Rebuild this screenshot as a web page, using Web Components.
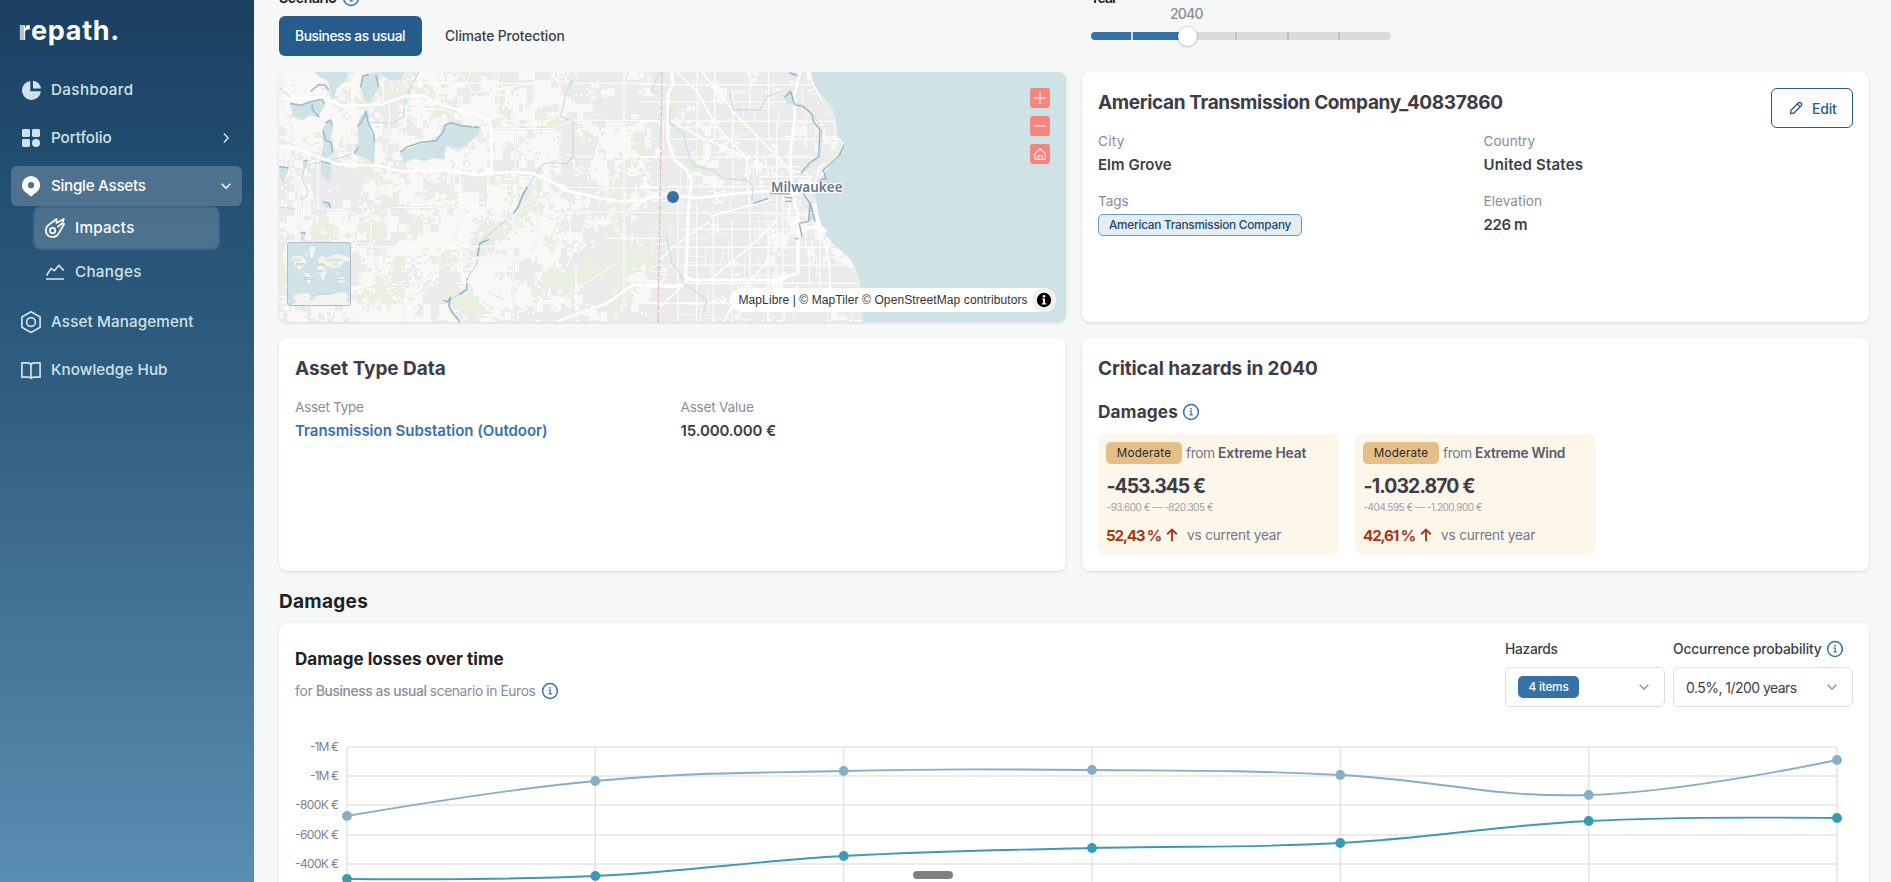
<!DOCTYPE html>
<html lang="en">
<head>
<meta charset="utf-8">
<title>repath – Impacts</title>
<style>
html,body{margin:0;height:100%;overflow:hidden;background:#f5f8f7}
body{font-family:Inter,"Liberation Sans",sans-serif;color:#3d3d48}
</style>
</head>
<body>
<rp-app></rp-app>
<script>
const define = (name, html, setup) => {
  const tpl = document.createElement('template');
  tpl.innerHTML = html;
  customElements.define(name, class extends HTMLElement {
    constructor() {
      super();
      this.attachShadow({mode: 'open'}).appendChild(tpl.content.cloneNode(true));
    }
    connectedCallback() { if (setup) setup(this, this.shadowRoot); }
  });
};

/* A line of text tracked to a given measure: <ui-text w="82">Dashboard</ui-text> */
define('ui-text', `<style>:host{display:inline-block;white-space:pre}span{display:inline-block}</style><span><slot></slot></span>`, (el, root) => {
  const w = parseFloat(el.getAttribute('w'));
  if (!w) return;
  const span = root.querySelector('span');
  const fit = () => {
    span.style.letterSpacing = '0px';
    const n = el.textContent.length, nat = span.getBoundingClientRect().width;
    if (nat) span.style.letterSpacing = ((w + .6 - nat) / n).toFixed(4) + 'px';
  };
  fit();
  requestAnimationFrame(fit);
});

define('ui-info', `<style>:host{display:inline-flex;width:18px;height:18px;color:#3672a9}</style>
<svg width="18" height="18" viewBox="0 0 18 18" fill="none" stroke="currentColor"><circle cx="9" cy="9" r="7.4" stroke-width="1.5"/><path d="M7.6 8.1H9.2V11.8M7.6 11.9H10.8" stroke-width="1.2"/><circle cx="9" cy="5.8" r=".9" fill="currentColor" stroke="none"/></svg>`);

const ICONS = {
  pie: '<path fill="currentColor" d="M9.3 1A9.5 9.5 0 1 0 19.9 11.2H9.3z"/><path fill="currentColor" d="M12 .8V8.6H20A9 9 0 0 0 12 .8z"/>',
  grid: '<g fill="currentColor"><rect x="1" y="1" width="8" height="8" rx="1.4"/><rect x="11" y="1" width="8" height="8" rx="1.4"/><rect x="1" y="11" width="8" height="8" rx="1.4"/><circle cx="15" cy="15" r="4"/></g>',
  pin: '<path fill="currentColor" fill-rule="evenodd" d="M10 0A9 9 0 0 0 1 9C1 13.4 3.3 15.5 6.3 17.6 8 18.9 9 20.4 10 20.4S12 18.9 13.7 17.6C16.7 15.5 19 13.4 19 9A9 9 0 0 0 10 0zM10 6.1A3.1 3.1 0 1 1 10 12.3 3.1 3.1 0 0 1 10 6.1z"/>',
  comet: '<g fill="none" stroke="currentColor" stroke-width="1.7" stroke-linejoin="round"><path d="M3 7.4 11.5 1V5L18.8.9 17 6 19.2 5.8 13.6 15.6A7 7 0 0 1 2.2 16.6 7 7 0 0 1 3 7.4z"/><path d="M16.6 5.6 12.5 9.2"/><circle cx="7.6" cy="12.6" r="2.7"/></g>',
  trend: '<g fill="none" stroke="currentColor" stroke-width="1.6" stroke-linejoin="round"><path d="M1.5 13.5 6 6.5 9.3 8.7 14 3.2 18.8 8.6"/><path d="M1 17H19"/></g>',
  hex: '<g fill="none" stroke="currentColor" stroke-width="1.7" stroke-linejoin="round"><path d="M10-.3 19.1 4.9V15.3L10 20.4.9 15.3V4.9z"/><circle cx="10" cy="10" r="4.4"/></g>',
  book: '<g fill="none" stroke="currentColor" stroke-width="1.7" stroke-linejoin="round"><path d="M.9 2.9H6.5Q10 2.9 10 5.3 10 2.9 13.5 2.9H19.1V17.2H13.2Q10.5 17.2 10 18.4 9.5 17.2 6.8 17.2H.9zM10 4.5V18"/></g>'
};
define('ui-icon', `<style>:host{display:inline-flex;width:20px;height:20px}svg{overflow:visible}</style><svg width="20" height="20" viewBox="0 0 20 20"></svg>`,
  (el, root) => { root.querySelector('svg').innerHTML = ICONS[el.getAttribute('name')] || ''; });

define('ui-chevron', `<style>:host{display:inline-flex;width:12px;height:12px}</style>
<svg width="12" height="12" viewBox="0 0 12 12" fill="none" stroke="currentColor" stroke-width="1.5"><path d="M1.6 3.8 6 8.1 10.4 3.8"/></svg>`);

define('nav-item', `<style>
:host{display:flex;align-items:center;height:40px;box-sizing:border-box;padding:0 10px;gap:10px;border-radius:6px;color:#cfe2ea;font-size:15.2px;font-weight:500}
:host([open]){background:rgba(255,255,255,.2);color:#fff}
:host([sub]){height:44px;padding:0 10px;border:2px solid transparent;border-radius:8px;margin:0 22px}
:host([sub][active]){color:#fff;background:rgba(255,255,255,.18);background-clip:border-box;border-color:rgba(24,62,94,.18)}
.txt{margin-top:-2px}
.tail{margin-left:auto;display:flex}
</style><ui-icon></ui-icon><span class="txt"><slot></slot></span><span class="tail"><slot name="tail"></slot></span>`,
  (el, root) => { const i = root.querySelector('ui-icon'); i.setAttribute('name', el.getAttribute('icon')); i.connectedCallback(); });

define('app-sidebar', `<style>
:host{display:block;width:254px;height:882px;box-sizing:border-box;padding:0 12px 0 11px;background:linear-gradient(#1b3f61 0,#235073 22%,#315f82 46%,#5a8db2 100%)}
.logo{height:70px;box-sizing:border-box;padding:14px 0 0 7.5px;color:#fff;font-size:27px;line-height:34px;font-weight:700}
.logo b{background:linear-gradient(90deg,#b9c2cf 0 38%,#fff 48%);-webkit-background-clip:text;background-clip:text;color:transparent}
nav{display:flex;flex-direction:column;gap:8px}
.right{transform:rotate(-90deg)}
</style>
<div class="logo"><ui-text w="101"><b>r</b>epath.</ui-text></div>
<nav>
<nav-item icon="pie"><ui-text w="82">Dashboard</ui-text></nav-item>
<nav-item icon="grid"><ui-text w="60">Portfolio</ui-text><ui-chevron class="right" slot="tail"></ui-chevron></nav-item>
<div>
<nav-item icon="pin" open><ui-text w="94">Single Assets</ui-text><ui-chevron slot="tail"></ui-chevron></nav-item>
<nav-item icon="comet" sub active><ui-text w="59">Impacts</ui-text></nav-item>
<nav-item icon="trend" sub><ui-text w="66">Changes</ui-text></nav-item>
</div>
<nav-item icon="hex"><ui-text w="142">Asset Management</ui-text></nav-item>
<nav-item icon="book"><ui-text w="116">Knowledge Hub</ui-text></nav-item>
</nav>`);

define('scenario-bar', `<style>
:host{display:grid;grid-template-columns:1fr 1fr;gap:16px;height:72px}
.label{height:20px;line-height:20px;margin-top:-12px;display:flex;align-items:center;gap:5px;color:#17171c;font-size:14px;font-weight:600}
.label ui-info{margin-top:-1px}
.tabs{display:flex;margin-top:8px;height:40px;line-height:40px;font-size:13.8px;font-weight:500}
.on{background:#265b8c;color:#fff;border-radius:6px;padding:0 17px 0 16px;width:110px}
.off{padding-left:23px}
.year{padding-left:8px}
.num{height:18px;line-height:18px;color:#8b8c98;font-size:14px;margin:-3px 0 0 80px;font-weight:500}
.slider{width:300px;height:8px;border-radius:4px;background:linear-gradient(#3672a9,#3672a9) 0/97px 8px no-repeat #dadbe0;margin:9px 0 0 .5px;position:relative}
i{position:absolute;top:0;width:2px;height:8px;background:#c0c1ca}
.thumb{position:absolute;left:87px;top:-5.5px;width:19px;height:19px;border-radius:50%;background:#fff;box-shadow:0 0 1px 1px rgba(0,0,0,.1),0 1px 3px rgba(0,0,0,.15)}
</style>
<div><div class="label"><ui-text w="57">Scenario</ui-text><ui-info></ui-info></div>
<div class="tabs"><div class="on"><ui-text w="109.5">Business as usual</ui-text></div><div class="off"><ui-text w="119">Climate Protection</ui-text></div></div></div>
<div class="year"><div class="label"><ui-text w="26">Year</ui-text></div><div class="num"><ui-text w="32">2040</ui-text></div>
<div class="slider"><i style="left:40px;background:#dadbe0"></i><i style="left:144px"></i><i style="left:196px"></i><i style="left:247px"></i><span class="thumb"></span></div></div>`);

define('ui-card', `<style>
:host{display:block;box-sizing:border-box;background:#fff;border-radius:8px;padding:16px;box-shadow:0 1px 3px rgba(0,0,0,.13)}
</style><slot></slot>`);

define('ui-field', `<style>:host{display:block;height:60px}
.l{height:20px;line-height:20px;font-size:13.6px;color:#8b8c98}
.v{height:24px;line-height:24px;margin-top:2px;font-size:15px;font-weight:600;color:#3d3d48;white-space:nowrap}
::slotted([slot=label]){display:inline-block}</style>
<div class="l"><slot name="label"></slot></div><div class="v"><slot></slot></div>`);

define('map-view', `<style>
:host{display:block;position:relative;height:250px;border-radius:8px;overflow:hidden;background:#f9f8f6;box-shadow:0 1px 3px rgba(0,0,0,.13)}
svg{display:block}
.ctl{position:absolute;right:16px;top:16px;display:flex;flex-direction:column;gap:8px}
.ctl svg{background:#f48680;border-radius:3px}
.attr{position:absolute;right:10px;bottom:10px;height:24px;width:326px;box-sizing:border-box;padding-left:8.5px;border-radius:12px;background:#fff;display:flex;justify-content:space-between;align-items:center;font:12px/24px "Liberation Sans",sans-serif;color:#333}
.attr svg{border-radius:12px}
.mini{position:absolute;left:8px;bottom:16px;border:1px solid #b3bcc8;border-radius:3px;overflow:hidden;width:62px;height:62px;background:#cfe2e6}
.pin{position:absolute;left:387.5px;top:119px;width:12px;height:12px;border-radius:50%;background:#3672a9}
.city{position:absolute;left:492px;top:106px;line-height:18px;font-size:13.4px;font-weight:600;font-family:"Noto Sans",sans-serif;color:#6b7687;text-shadow:0 0 1px #fff,1px 1px 1px #fff,-1px -1px 1px #fff,1px -1px 1px #fff,-1px 1px 1px #fff}
</style>
<svg class="base" width="787" height="250" viewBox="0 0 787 250">
<path class="grey" fill="#ebebeb"/><path class="green" fill="#e9f0e1"/><path class="gaps" stroke="#f8f8f7" fill="none"/>
<g transform="translate(-19,-72) scale(.33333)" fill="none" stroke-linejoin="round">
<g fill="#cfe2e6">
<path d="M162 216H265L256 244 228 268 224 298 216 296 204 244 180 232z"/>
<path d="M307 226 358 218 354 264 330 308 316 304 302 262z"/><path d="M362 216H430L424 236 398 242 378 234z"/>
<path d="M90 308 120 318 158 306 186 304 194 318 182 336 176 352 150 346 126 362 98 346z"/>
<path d="M200 366 212 360 220 378 212 420 220 464 196 474 182 472 190 434 186 390z"/>
<path d="M184 484 210 488 216 506 206 546 194 534 182 516z"/>
<path d="M300 352 316 334 326 344 328 388 346 430 342 490 322 478 280 462 296 420 292 376z"/>
<path d="M420 456 480 432 530 424 554 376 576 368 658 382 658 400 624 432 598 446 554 438 554 478 520 474 492 484 466 476 430 488z"/>
<path d="M58 500 86 502 82 520 70 550 58 532z"/><path d="M188 606 206 606 212 624 198 626z"/><path d="M122 698 138 698 132 724 122 720z"/><path d="M128 484 144 484 140 506 128 496z"/>
</g>
<g stroke="#a2bccb" stroke-width="5"><path d="M420 456 444 440 478 428 528 422 552 392 554 376 572 368 604 378 658 382"/><path d="M90 310 122 316 158 304 186 298 194 312M152 274 176 254 196 256 206 270M302 262 308 228 326 224M348 226 356 262M156 312 158 330 178 352M196 368 212 360 216 376M190 392 196 420 214 428 218 458M294 380 312 352 318 334 324 366 340 402 344 428M182 484 212 490M58 500 86 504M130 484 142 480M188 606 206 608 212 622M122 698 138 698M282 460 296 442"/></g>
<g stroke="#c3dde3" stroke-width="3.5"><path d="M476 216 450 268 434 310 430 352 396 370 330 366M937 240 918 280 902 350 938 364 940 430 938 470 918 492 870 488 846 494 822 530 800 566 776 616 752 650 690 700 660 730 652 790 622 834 620 870 598 884 566 900 574 938 600 965M58 620 104 628M134 500 126 540 144 570 140 590 124 600M150 492 214 480 280 462M58 264 90 290"/></g>
<g stroke="#8cb0c1" stroke-width="4"><path d="M802 560 786 590 774 622 756 646M688 718 660 730 652 768M550 900 562 906 572 892 566 918 578 938 600 965M622 836 620 868 598 884"/></g>
<g stroke="#e0e0e0" stroke-width="7"><path d="M68 216V296L68 330 94 370V470 M94 478 94 520 116 550V640L118 728M98 300 M124 610 190 628 250 630 324 656 398 622H520L600 616V680L584 700 598 740 632 774 780 782 810 764 836 700 832 600 910 574M360 500 356 570 336 620 332 730 350 790 358 826 400 852 432 920V965M400 854H460L550 800 632 770M400 862 340 910 270 958M388 310V400L374 494M714 216V340L766 374V516M696 386H880L940 360 1200 362M920 562 1200 564M828 648H910L930 634 1200 638M760 774V965"/></g>
<g stroke="#fff" stroke-width="4"><path d="M68 216V296L68 330 94 370V470L94 520 116 550V640L118 728M124 610 190 628 250 630 324 656 398 622H520L600 616V680L584 700 598 740 632 774 780 782 810 764 836 700 832 600 910 574M360 500 356 570 336 620 332 730 350 790 358 826 400 852 432 920V965M400 854H460L550 800 632 770M400 862 340 910 270 958M388 310V400L374 494M714 216V340L766 374V516M696 386H880L940 360 1200 362M920 562 1200 564M828 648H910L930 634 1200 638M760 774V965"/>
<path stroke-width="3" d="M370 240V304M280 240V480M174 470V620M600 500V740M684 500V620M822 216V400M930 640V720M460 250H820L640 278 600 216M948 470H1200M1040 362V600M1092 216V920M948 800V965M278 740H800M870 640H990L920 800M560 460 640 530M1038 715H1200M760 660V780M940 250H1190M420 320 560 330 640 380M600 620 740 626 836 700M860 690 910 740M436 940 530 830M900 900 1070 790"/></g>
<g stroke="#fff" stroke-width="8"><path d="M62 296 190 292 246 318 360 314 430 290 486 286 530 310 660 348 688 360 694 390V514L660 526 560 510 420 514 360 498 230 492 100 442H58M660 522 760 516 816 520 884 550 920 572 1010 592 1090 606 1200 590M890 965 1040 910 1120 854 1200 856"/></g>
<g stroke="#f6f6f5" stroke-width="4"><path d="M750 650 830 612M760 650 830 570M680 618 800 700M690 640 840 690M560 820 660 770M600 870 760 690M740 600 784 720"/></g>
</g>
<g transform="translate(361,-12) scale(.33333)" fill="none" stroke-linejoin="round">
<path fill="#cfe2e6" d="M512 36 520 66 538 98 556 118 580 150 590 190 594 234 612 250 600 282 564 322 546 342 534 374 524 400 530 440 540 480 554 520 580 552 620 586 640 612 656 650 666 690 668 790H1280V36z"/>
<path fill="#cfe2e6" d="M430 112 450 94 466 112 462 136 440 130zM505 426 514 420 526 480 506 484zM450 38H474L468 50H456z"/>
<g fill="#e6efdf"><path d="M92 60 116 80 112 150 96 200 92 130zM92 190 130 216 140 250 118 246zM130 300 200 318 190 340 150 330zM58 460H88V500L60 508zM196 420 220 424 214 452 198 448zM280 524 330 520 352 538 340 546z"/></g>
<g stroke="#fdfdfd" stroke-width="6"><path d="M94 36 100 74 84 100V240L104 300 140 330 154 366 146 440 140 600 136 650 154 660H420L440 650 474 640V460L456 400 450 290 464 180V100L480 36" stroke="#fff" stroke-width="9"/>
<path d="M0 424 60 402 170 414 270 402 390 392" stroke="#fff" stroke-width="9"/><path d="M0 678 110 680 150 655" stroke="#fff" stroke-width="8"/>
<path stroke-width="5" d="M186 36 290 166 450 330M110 36 172 96 230 200 320 294 328 430M90 180 160 220 320 294M60 740 146 660M210 660 330 560 408 484M200 490 100 560 60 600M210 470 390 420M250 790 280 730 384 600M520 430 540 490 550 540 568 600 570 690M564 320 520 380 500 340 440 330M596 236 606 250 590 290 540 320 524 370" stroke="#fff"/></g>
<g stroke="#fdfdfd" stroke-width="3.5"><path d="M0 74H522M0 126H440M0 184H588M90 238H590M0 292H540M320 320H480M360 350H520M0 380H450M0 458H530M120 508H440M80 562H560M120 616H630M120 670H655M0 730H560M172 36V238M224 36V240M278 90V420M330 36V160M386 36V240M410 180V560M114 380V790M170 430V790M220 470V790M276 480V790M330 430V740M384 480V790M428 360V790M508 560V670M540 520V680M0 310 40 370M350 220V350M500 36 550 130"/></g>
<g stroke="#c9e0e6" stroke-width="4"><path d="M90 140 90 190 130 220 150 300 170 320 220 330 250 356 320 360 340 380 336 420M60 36 34 90 50 100M270 100 280 150 360 150 380 110 430 94M80 530 96 610 114 630 130 670 200 720 190 760"/></g>
<g stroke="#94b3c4" stroke-width="4"><path d="M448 38 474 48M434 112 452 94 464 134 490 140 516 162 520 184 540 210 536 290 508 310 482 340M340 430 384 416M390 400 450 402M432 412 458 414M436 424 456 424M490 402 510 430 506 484 478 490 486 530M510 430 526 484M612 254 598 286 550 330 558 356 532 362M466 536H476"/></g>
<g stroke="#c6dce3" stroke-width="3"><path d="M464 130 490 136 520 162 545 210 541 290 512 314 486 344"/></g>
<path d="M66 36 60 420 54 790" stroke="#e0c0c2" stroke-width="4" stroke-dasharray="15 5"/>
<path d="M594 236 608 252 592 290 550 328 560 300 586 270z" fill="#edf1e3"/>
<path d="M524 430 534 490 556 514 540 512 526 500 500 506" stroke="#fff" stroke-width="9"/>
</g></svg>
<div class="city"><ui-text w="71">Milwaukee</ui-text></div>
<div class="pin"></div>
<div class="mini"><svg width="62" height="62" viewBox="0 0 186 186"><g fill="#f3f4ef">
<path d="M8 48 14 40 32 38 44 42 52 50 58 58 50 64 46 72 40 74 34 84 28 72 20 66 18 54zM50 30 56 32 60 40 54 42zM64 14 72 9 82 12 80 28 72 46 66 40 66 26zM42 84 54 92 60 96 50 96zM52 92 62 92 74 102 68 114 60 124 56 110zM88 70 104 68 116 80 114 92 108 108 102 114 98 98 88 84zM90 52 96 44 104 36 112 46 128 38 150 34 186 42V52L168 56 160 66 152 76 142 70 136 80 128 70 118 72 108 62 92 62zM148 108 160 102 170 104 176 114 164 120 150 118zM140 86 152 90 160 94 148 94z"/>
<path d="M14 158 34 152 56 150 66 152 68 164 62 172 74 172 84 160 98 154 120 152 140 154 156 148 178 150 180 162 172 174 186 178V186H14L24 176z"/></g>
<g fill="#dfe9d9"><path d="M10 48 26 44 42 50 32 58 20 56zM106 50 128 44 168 48 154 56 122 56zM90 80 104 84 102 92 94 90z"/></g>
<g stroke="#a9b1b6" stroke-width="1.6"><path d="M24 62H48M24 66H46M88 63H108M134 63H150M86 84H112M50 104H72M48 109H76M92 154H130M146 110H176"/></g></svg></div>
<div class="ctl">
<svg width="20" height="20" stroke="#fcd5d2" stroke-width="1.5"><path d="M4 10H16M10 4V16"/></svg>
<svg width="20" height="20" stroke="#fcd5d2" stroke-width="1.5"><path d="M4 10H16"/></svg>
<svg width="20" height="20" stroke="#fde8e6" stroke-width="1.2" fill="none"><path d="M5 9.8V15.4H15.4V9.8L10.2 4.9zM8.4 15.2V11.6H12V15.2"/></svg></div>
<div class="attr"><ui-text w="288.5">MapLibre | © MapTiler © OpenStreetMap contributors</ui-text>
<svg width="24" height="24"><rect width="24" height="24" fill="#f0f0f0"/><circle cx="12" cy="12" r="7.2"/><path d="M10 10.4H13V15.3H14.3V16.4H9.8V15.3H11.1V11.5H10z" fill="#fff"/><circle cx="12" cy="8.2" r="1.3" fill="#fff"/></svg></div>`,
(el, root) => {
  /* land cover: thresholded value noise, merged into horizontal runs */
  const h = (x, y, s) => { let n = Math.imul(x, 374761393) ^ Math.imul(y, 668265263) ^ Math.imul(s, 974711); n = Math.imul(n ^ (n >>> 13), 1274126177); return ((n ^ (n >>> 16)) >>> 0) / 4294967296; };
  const block = (x, y, c, s) => h(Math.floor(x / c), Math.floor(y / c), s);
  const smooth = (x, y, c, s) => {
    const gx = x / c, gy = y / c, ix = Math.floor(gx), iy = Math.floor(gy), fx = gx - ix, fy = gy - iy;
    return (h(ix, iy, s) * (1 - fx) + h(ix + 1, iy, s) * fx) * (1 - fy) + (h(ix, iy + 1, s) * (1 - fx) + h(ix + 1, iy + 1, s) * fx) * fy;
  };
  const runs = test => {
    let d = '';
    for (let y = 0; y < 250; y += 2) for (let x = 0; x < 620;) {
      if (!test(x, y)) { x += 2; continue; }
      const x0 = x; while (x < 620 && test(x, y)) x += 2;
      d += `M${x0} ${y}h${x - x0}v2h${x0 - x}z`;
    }
    return d;
  };
  root.querySelector('.grey').setAttribute('d', runs((x, y) => {
    const v = .56 * smooth(x, y, 19, 1) + .28 * block(x, y, 8, 2) + .16 * block(x, y, 3, 3);
    return v > (x > 370 ? .33 : x > 280 ? .42 : .54);
  }));
  root.querySelector('.green').setAttribute('d', runs((x, y) => {
    const v = .64 * smooth(x, y, 17, 7) + .2 * block(x, y, 6, 8) + .16 * block(x, y, 3, 9);
    return v > (x > 370 ? .8 : y > 150 ? .63 : .67);
  }));
  let g = '';
  for (let i = 0; i < 150; i++) {
    const x = 370 + Math.round(h(i, 1, 21) * 200), y = Math.round(h(i, 2, 22) * 250), l = 6 + Math.round(h(i, 3, 23) * 20);
    g += h(i, 4, 24) > .5 ? `M${x} ${y + .5}h${l}` : `M${x + .5} ${y}v${l}`;
  }
  root.querySelector('.gaps').setAttribute('d', g);
});

define('hazard-tile', `<style>
:host{display:block;box-sizing:border-box;width:241px;height:121px;border-radius:8px;background:#fdf6ea;padding:8px}
.top{display:flex;align-items:center;height:22px;font-size:13.8px;color:#767888;white-space:pre}
.badge{width:76px;height:22px;line-height:22px;text-align:center;border-radius:5px;background:#e5bf88;color:#2b2a2c;font-size:11.6px;margin-right:4px}
.top b{font-weight:600;color:#5a5b6c}
.top ui-text{margin-right:3.5px}.badge ui-text{margin:0}
.val{height:28px;line-height:28px;margin-top:8px;font-size:19.4px;font-weight:700;padding-left:.5px}
.rng{height:14px;line-height:14px;font-size:10px;color:#9fa0aa;padding-left:.5px}
.pct{display:flex;align-items:center;height:20px;margin-top:11px;font-size:15.2px;font-weight:700;color:#a1391d}
.pct svg{margin:0 9px 0 5px}
.vs{font-size:13.6px;font-weight:400;color:#767888}
</style>
<div class="top"><span class="badge"><ui-text w="54">Moderate</ui-text></span><ui-text w="28">from</ui-text><b><slot></slot></b></div>
<div class="val"><slot name="value"></slot></div><div class="rng"><slot name="range"></slot></div>
<div class="pct"><slot name="pct"></slot><svg width="12" height="14" viewBox="0 0 12 14" fill="none" stroke="currentColor" stroke-width="1.9"><path d="M6 13.2V2M1.2 6.3 6 1.6 10.8 6.3"/></svg><ui-text class="vs" w="93.5">vs current year</ui-text></div>`);

define('ui-select', `<style>
:host{display:block}
.l{height:20px;line-height:20px;display:flex;align-items:center;gap:4px;font-size:13.8px;font-weight:500;color:#3d3d48}
.b{height:40px;box-sizing:border-box;border:1px solid #dcdde1;border-radius:6px;margin-top:8px;padding:0 14px 0 12px;display:flex;align-items:center;justify-content:space-between;font-size:14px;background:#fff}
ui-chevron{color:#9b9ca4}
</style><div class="l"><slot name="label"></slot></div><div class="b"><slot></slot><ui-chevron></ui-chevron></div>`);

define('loss-chart', `<style>:host{display:block;height:160px}svg{display:block;overflow:visible}text{font-family:Inter,sans-serif;font-size:12px;fill:#7f818e}</style><svg width="1558" height="160" viewBox="295 722 1558 160"></svg>`,
(el, root) => {
  const xs = [347, 595.3, 843.7, 1092, 1340.3, 1588.7, 1837];
  let s = '';
  [[747,'-1M €',29],[776,'-1M €',29],[805,'-800K €',44],[835,'-600K €',44],[864,'-400K €',44]].forEach(([y,t,w]) => {
    s += `<path d="M347 ${y}H1837" stroke="#ebebeb" stroke-width="2"/><text x="${339 - w}" y="${y + 4}" textLength="${w}">${t}</text>`;
  });
  xs.forEach(x => s += `<path d="M${x} 747V900" stroke="#dfdfe0" stroke-width="1.2"/>`);
  const line = (ys, c) => {
    let d = `M${xs[0]} ${ys[0]}`;
    const m = ys.map((y, i) => i && i < 6 ? (ys[i + 1] - ys[i - 1]) / 2 * .8 : 0);
    for (let i = 0; i < 6; i++) {
      const a = i ? 99 : 0, b = i < 5 ? 99 : 0;
      d += `C${xs[i] + a} ${ys[i] + (i ? m[i] / 2 : 0)} ${xs[i + 1] - b} ${ys[i + 1] - (i < 5 ? m[i + 1] / 2 : 0)} ${xs[i + 1]} ${ys[i + 1]}`;
    }
    s += `<path d="${d}" fill="none" stroke="${c}" stroke-width="1.9"/>` + xs.map((x, i) => `<circle cx="${x}" cy="${ys[i]}" r="4.9" fill="${c}"/>`).join('');
  };
  line([816, 781, 771, 770, 775, 795, 760], '#88adc7');
  line([879, 876, 856, 848, 843, 821, 818], '#3c9ab2');
  root.querySelector('svg').innerHTML = s;
});

define('rp-app', `<style>
:host{display:grid;grid-template-columns:254px 1fr;height:882px;overflow:hidden;position:relative}
main{padding:0 22px 0 25px;overflow:hidden;height:882px;box-sizing:border-box}
.two{display:grid;grid-template-columns:787px 787px;gap:16px}
.r1{grid-auto-rows:250px}.r2{grid-auto-rows:233px;margin-top:16px}
.head{display:flex;justify-content:space-between;height:28px}
.t{font-size:19px;line-height:30px;font-weight:700;color:#3d3d48}
.edit{box-sizing:border-box;width:82px;height:40px;border:1px solid #265b8c;border-radius:6px;color:#265b8c;font-size:14px;font-weight:500;display:flex;align-items:center;gap:9px;padding-left:17px}
.fields{display:grid;grid-template-columns:1fr 1fr;gap:0 16px;margin-top:15px}
.tag{display:inline-block;box-sizing:border-box;width:204px;height:22px;line-height:20px;border:1px solid #659bbd;border-radius:5px;background:#e5edf3;color:#20486d;font-size:11.8px;font-weight:500;padding-left:10px;vertical-align:top;margin-top:.5px}
.link{color:#3672a9}
.sub{display:flex;align-items:center;gap:4px;font-size:17.2px;line-height:24px;font-weight:700;margin-top:18px}
.tiles{display:flex;gap:16px;margin-top:10px}
h2{font-size:19px;line-height:28px;font-weight:700;color:#212126;margin:17px 0 7px}
.losses{height:300px}
.lh{display:flex;justify-content:space-between;height:83px}
.lt{font-size:17px;line-height:24px;font-weight:700;color:#212126;margin-top:8px}
.ls{display:flex;align-items:center;gap:3.3px;height:20px;margin-top:10px;font-size:13.8px;color:#8b8c98}
.ls b{font-weight:500}
.ls ui-info{margin-left:2px}
.filters{display:grid;grid-template-columns:160px 180px;gap:8px}
.chip{background:#3672a9;color:#fff;height:22px;width:61px;line-height:22px;border-radius:5px;font-size:11.8px;font-weight:500;text-align:center}
.handle{position:absolute;left:913px;top:871px;width:40px;height:8px;border-radius:4px;background:#808080}
</style>
<app-sidebar></app-sidebar>
<main>
<scenario-bar></scenario-bar>
<section class="two r1">
<map-view></map-view>
<ui-card><div class="head"><ui-text class="t" w="404">American Transmission Company_40837860</ui-text>
<div class="edit"><svg width="14" height="14" viewBox="0 0 14 14" fill="none" stroke="currentColor" stroke-width="1.3" stroke-linejoin="round"><path d="M1.5 12.6 2 9.3 8.9 2.2Q10.5.8 12 2.1T11.9 5L5 12 1.5 12.6zM8.2 3.1 11.1 5.8"/></svg><ui-text w="24">Edit</ui-text></div></div>
<div class="fields">
<ui-field><ui-text slot="label" w="26">City</ui-text><ui-text w="73">Elm Grove</ui-text></ui-field>
<ui-field><ui-text slot="label" w="51">Country</ui-text><ui-text w="99">United States</ui-text></ui-field>
<ui-field><ui-text slot="label" w="30">Tags</ui-text><span class="tag"><ui-text w="181.5">American Transmission Company</ui-text></span></ui-field>
<ui-field><ui-text slot="label" w="58">Elevation</ui-text><ui-text w="43">226 m</ui-text></ui-field>
</div></ui-card>
</section>
<section class="two r2">
<ui-card><div class="head"><ui-text class="t" w="150">Asset Type Data</ui-text></div>
<div class="fields"><ui-field><ui-text slot="label" w="68">Asset Type</ui-text><ui-text class="link" w="252">Transmission Substation (Outdoor)</ui-text></ui-field>
<ui-field><ui-text slot="label" w="72.5">Asset Value</ui-text><ui-text w="95">15.000.000 €</ui-text></ui-field></div></ui-card>
<ui-card><div class="head"><ui-text class="t" w="219">Critical hazards in 2040</ui-text></div>
<div class="sub"><ui-text w="79.5">Damages</ui-text><ui-info></ui-info></div>
<div class="tiles">
<hazard-tile><ui-text w="87.5">Extreme Heat</ui-text><ui-text slot="value" w="98">-453.345 €</ui-text><ui-text slot="range" w="106">-93.600 € — -820.305 €</ui-text><ui-text slot="pct" w="54.5">52,43 %</ui-text></hazard-tile>
<hazard-tile><ui-text w="89.5">Extreme Wind</ui-text><ui-text slot="value" w="110.5">-1.032.870 €</ui-text><ui-text slot="range" w="118">-404.595 € — -1.200.900 €</ui-text><ui-text slot="pct" w="51.5">42,61 %</ui-text></hazard-tile>
</div></ui-card>
</section>
<h2><ui-text w="88.5">Damages</ui-text></h2>
<ui-card class="losses">
<div class="lh"><div><div class="lt"><ui-text w="208">Damage losses over time</ui-text></div>
<div class="ls"><ui-text w="17">for</ui-text><b><ui-text w="110">Business as usual</ui-text></b><ui-text w="105">scenario in Euros</ui-text><ui-info></ui-info></div></div>
<div class="filters"><ui-select><ui-text slot="label" w="52">Hazards</ui-text><span class="chip"><ui-text w="39.5">4 items</ui-text></span></ui-select>
<ui-select><ui-text slot="label" w="148">Occurrence probability</ui-text><ui-info slot="label"></ui-info><ui-text w="110">0.5%, 1/200 years</ui-text></ui-select></div></div>
<loss-chart></loss-chart>
</ui-card>
</main>
<div class="handle"></div>`);
</script>
</body>
</html>
